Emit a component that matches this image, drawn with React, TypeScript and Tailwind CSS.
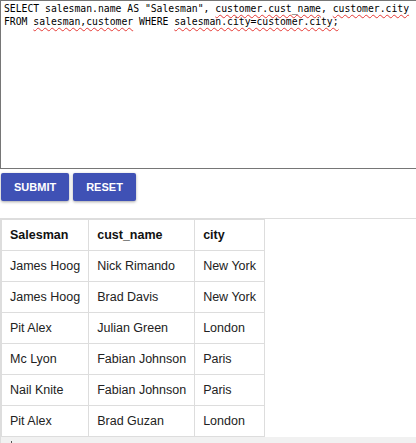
import * as React from 'react';

const rows: [string, string, string][] = [
  ['James Hoog', 'Nick Rimando', 'New York'],
  ['James Hoog', 'Brad Davis', 'New York'],
  ['Pit Alex', 'Julian Green', 'London'],
  ['Mc Lyon', 'Fabian Johnson', 'Paris'],
  ['Nail Knite', 'Fabian Johnson', 'Paris'],
  ['Pit Alex', 'Brad Guzan', 'London'],
];

const Sq: React.FC<{ children: React.ReactNode }> = ({ children }) => (
  <span className="underline decoration-wavy decoration-[#e53935] decoration-1 underline-offset-2">{children}</span>
);

const App: React.FC = () => {
  return (
    <div className="w-[416px] h-[443px] overflow-hidden bg-white font-['Liberation_Sans',Arial,sans-serif]">
      <div className="overflow-hidden">
        <div className="w-[430px] h-[169px] border border-[#767676] px-[3px] py-[1px] font-['DejaVu_Sans_Mono',monospace] text-[9.75px] leading-[13px] text-black whitespace-pre">
          {'SELECT salesman.name AS "Salesman", '}<Sq>customer.cust_name</Sq>{', '}<Sq>customer.city</Sq>
          {'\nFROM '}<Sq>salesman,customer</Sq>{' WHERE '}<Sq>salesman.city=customer.city;</Sq>
        </div>
      </div>

      <div className="flex gap-1 mt-1 ml-[1px]">
        <button className="h-7 px-[13px] bg-[#3f51b5] text-white text-[11px] font-bold rounded-[2px] shadow-[0_1px_3px_rgba(0,0,0,0.35)]">
          SUBMIT
        </button>
        <button className="h-7 px-[13px] bg-[#3f51b5] text-white text-[11px] font-bold rounded-[2px] shadow-[0_1px_3px_rgba(0,0,0,0.35)]">
          RESET
        </button>
      </div>

      <div className="mt-[17px] border-t border-l border-[#dddddd]">
        <table className="border-collapse text-[12.5px] leading-4 text-[#222]">
          <thead>
            <tr>
              {['Salesman', 'cust_name', 'city'].map((h) => (
                <th key={h} className="border border-[#dddddd] px-2 py-[7px] text-left font-bold text-[#111]">
                  {h}
                </th>
              ))}
            </tr>
          </thead>
          <tbody>
            {rows.map((r, i) => (
              <tr key={i}>
                {r.map((c, j) => (
                  <td key={j} className="border border-[#dddddd] px-2 py-[7px] whitespace-nowrap">
                    {c}
                  </td>
                ))}
              </tr>
            ))}
          </tbody>
        </table>
        <div className="h-3 bg-[#f1f1f1] relative">
          <div className="absolute left-[10px] top-[4px] w-[1px] h-[2px] bg-[#555]" />
        </div>
      </div>
    </div>
  );
};

export default App;
